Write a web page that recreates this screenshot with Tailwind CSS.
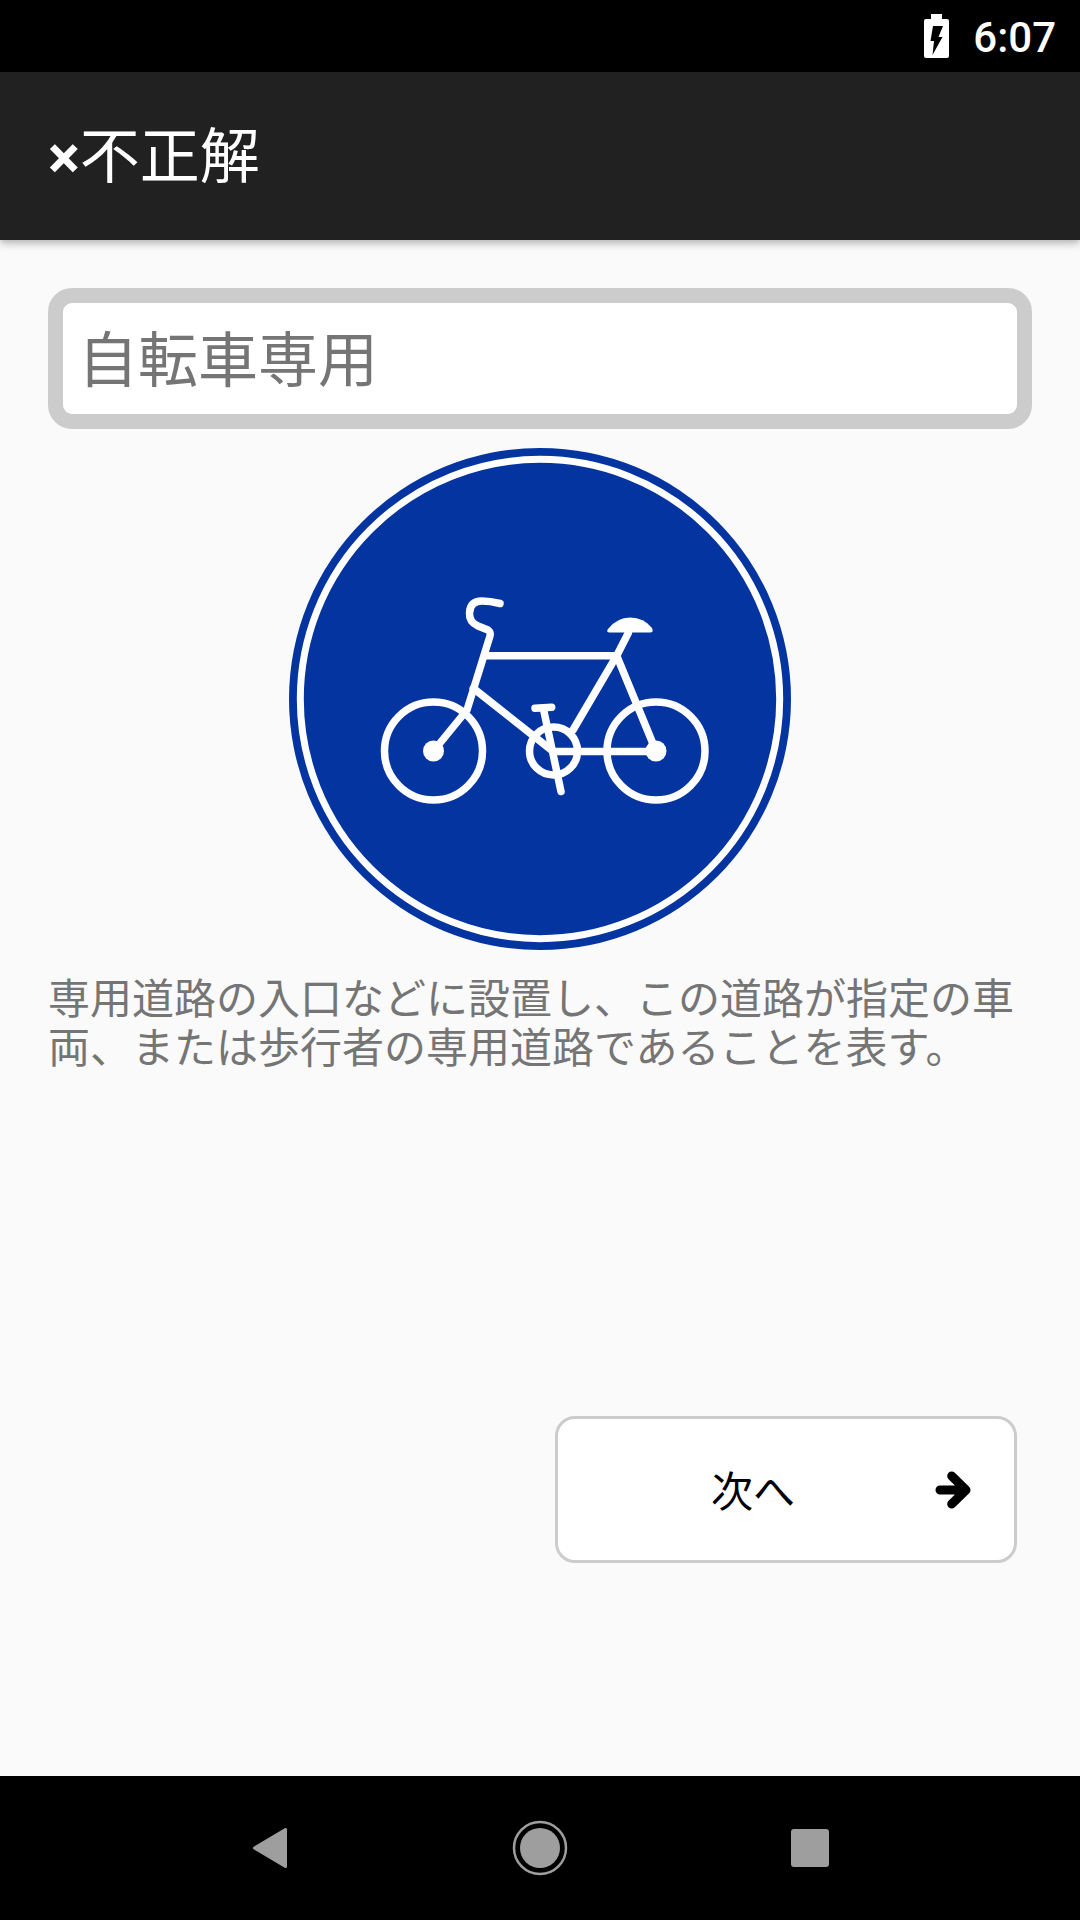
<!DOCTYPE html>
<html lang="ja">
    <head>
        <meta charset="UTF-8" />
        <meta name="viewport" content="width=device-width, initial-scale=1.0" />
        <title>不正解</title>
        <script src="https://cdn.jsdelivr.net/npm/@tailwindcss/browser@4"></script>
    </head>
    <body class="bg-[#fafafa] font-['Roboto','Noto_Sans_CJK_JP',sans-serif]">
        <div class="w-[1080px] h-[1920px] flex flex-col overflow-hidden">
            <!-- Status bar -->
            <div class="h-[72px] bg-black flex items-center justify-end text-white">
                <svg class="w-[25px] h-[44px]" viewBox="925 14 25 44">
                    <path fill="#fff" d="M932 14h11v5h5q2 0 2 2v35q0 2-2 2h-21q-2 0-2-2V21q0-2 2-2h5z" />
                    <path fill="#000" d="M934 26h10l-4.500 11h4l-10 18 1.500-14h-3.500z" />
                </svg>
                <span class="ml-[24px] mr-[24px] mt-[3px] text-[42px] leading-none font-medium">6:07</span>
            </div>

            <!-- App bar -->
            <header class="relative z-10 h-[168px] bg-[#212121] shadow-[0_3px_8px_rgba(0,0,0,0.3)] flex items-center pl-[48px] pt-[4px] text-white text-[60px] leading-none">
                <span class="font-bold">×</span><span>不正解</span>
            </header>

            <!-- Quiz answer -->
            <main class="flex-1 px-[48px] pt-[48px] flex flex-col">
                <div class="h-[141px] bg-white border-[15px] border-[#cccccc] rounded-[24px] flex items-center pl-[15px] pt-[7px] text-[60px] leading-none text-[#757575]">
                    自転車専用
                </div>

                <svg class="w-[502px] h-[502px] mt-[19px] mx-auto" viewBox="289 448 502 502">
                    <circle cx="540" cy="699" r="251" fill="#0334a0" />
                    <circle cx="540" cy="699" r="239.700" fill="none" stroke="#fff" stroke-width="7" />
                    <g fill="none" stroke="#fff" stroke-width="7.500" stroke-linecap="round" stroke-linejoin="round">
                        <circle cx="433.500" cy="751" r="49" />
                        <circle cx="656" cy="751" r="49" />
                        <circle cx="553.500" cy="751" r="24" />
                        <path d="M500 603.500Q490 601 482 601Q470 601 469.500 613Q469 622 478 626L488 630Q491 632 490 636L467 710L433.500 751" />
                        <path d="M485 655.700H616.700" />
                        <path d="M628.300 633L616.700 655.700L656 751" />
                        <path d="M616.700 655.700L573 730" />
                        <path d="M473.300 688.300L553.300 751.500H656" />
                        <path d="M543.300 708.300L561 791.500" />
                        <path d="M535 708.300L551.700 707.300" />
                    </g>
                    <circle cx="433.500" cy="751" r="10.500" fill="#fff" />
                    <circle cx="656" cy="751" r="10.500" fill="#fff" />
                    <path fill="#fff" d="M609 632.500Q606 632 608 629Q617 617.500 630 617.500Q644 617.500 652 628Q654 632.500 650 632.500z" />
                </svg>

                <p class="mt-[25px] text-[42px] leading-[49px] text-[#757575]">
                    専用道路の入口などに設置し、この道路が指定の車両、または歩行者の専用道路であることを表す。
                </p>

                <button class="mt-[343px] ml-auto mr-[15px] w-[462px] h-[147px] bg-white border-[3px] border-[#cccccc] rounded-[20px] flex items-center pl-[153px] text-[42px] leading-none text-black">
                    <span class="mt-[6px]">次へ</span>
                    <svg class="w-[38px] h-[38px] ml-[140px] mt-[1px]" viewBox="935 1471 38 38">
                        <path d="M940 1490H965M951.700 1476L966 1490L951.700 1504" fill="none" stroke="#000" stroke-width="9" stroke-linecap="round" stroke-linejoin="round" />
                    </svg>
                </button>
            </main>

            <!-- Navigation bar -->
            <nav class="relative h-[144px] bg-black">
                <svg class="w-[1080px] h-[144px]" viewBox="0 1776 1080 144">
                    <path fill="#9e9e9e" stroke="#9e9e9e" stroke-width="3" stroke-linejoin="round" d="M254.500 1848L285.500 1829.500V1866.500z" />
                    <circle cx="540" cy="1848" r="26" fill="none" stroke="#9e9e9e" stroke-width="2.500" />
                    <circle cx="540" cy="1848" r="20" fill="#9e9e9e" />
                    <rect x="791" y="1829" width="38" height="38" rx="3" fill="#9e9e9e" />
                </svg>
            </nav>
        </div>
    </body>
</html>
